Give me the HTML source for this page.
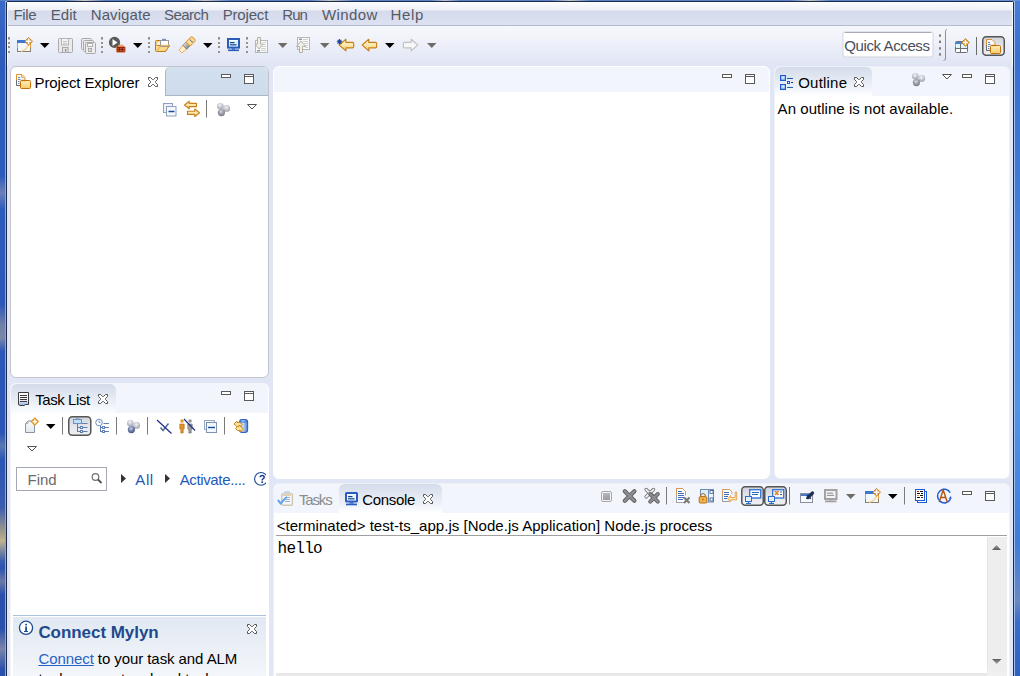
<!DOCTYPE html>
<html><head><meta charset="utf-8">
<style>
*{box-sizing:border-box;margin:0;padding:0}
html,body{width:1020px;height:676px;overflow:hidden;background:#e1e6f6}
body{position:relative;font-family:"Liberation Sans",sans-serif;color:#000}
.a{position:absolute}
.t{position:absolute;white-space:pre;line-height:1;font-size:15px}
</style></head><body>
<div class="a" style="left:0;top:0;width:5px;height:676px;background:linear-gradient(#3a68c6,#2d5bbd 10%,#2d5bbd 26%,#6a80b8 28.5%,#2d5bbd 31%,#2b57b8 45%,#7080a8 48%,#7a88a8 50%,#2b57b8 52%,#2a55b5 64%,#5a78b0 66%,#2a55b5 68%,#3a5db0 75%,#a8a088 79%,#c0b490 80%,#3a5db0 83%,#2a52b0 84%,#6a7aa8 86%,#2a50ad 88%,#2a50ad 93%,#7a86a8 96%,#2a50ad 99%)"></div>
<div class="a" style="left:5px;top:0;width:1px;height:676px;background:#8aa8de"></div>
<div class="a" style="left:1014px;top:0;width:1px;height:676px;background:#9cc0f0"></div>
<div class="a" style="left:1015px;top:0;width:5px;height:676px;background:linear-gradient(#4a7ed6,#3a6fd0 8%,#3f78d8 25%,#4d8ce6 45%,#5294ea 60%,#3f7cdc 80%,#6a88c0 89%,#3a6ccc 92%,#2f60c4)"></div>
<div class="a" style="left:0;top:0;width:1020px;height:1px;background:linear-gradient(90deg,#5a80c8 0,#5a80c8 65px,#d0ccb8 85px,#5a80c8 105px,#5a80c8 185px,#c8c8c0 205px,#5a80c8 230px,#5a80c8 310px,#c8c8c0 330px,#5a80c8 355px,#5a80c8 430px,#c0c4c8 445px,#5a80c8 460px,#5a80c8 550px,#c8c8c0 570px,#5a80c8 590px,#5a80c8 790px,#c8c8c0 810px,#5a80c8 830px,#6a90d8 1020px)"></div>
<div class="a" style="left:6px;top:1px;width:1008px;height:675px;border:1px solid #1c2a4c;border-bottom:none;border-radius:2px 2px 0 0"></div>
<div class="a" style="left:7px;top:2px;width:1006px;height:23px;background:linear-gradient(#fcfdfe 0,#eef0f7 8px,#d6dbeb 9px,#dde2f1 23px)"></div>
<div class="a" style="left:7px;top:25px;width:1006px;height:1px;background:#b6bbcb"></div>
<div class="a" style="left:7px;top:26px;width:1006px;height:40px;background:linear-gradient(#f7f8fc,#eef1f9 40%,#dfe5f5)"></div>
<div class="a" style="left:7px;top:2px;width:1px;height:64px;background:rgba(255,255,255,.8)"></div>
<div class="a" style="left:1012px;top:2px;width:1px;height:64px;background:rgba(255,255,255,.8)"></div>

<!-- Project Explorer stack (active) -->
<div class="a" style="left:10px;top:66px;width:259px;height:312px;border:1px solid #c3c5cb;border-radius:6px;background:#fff;overflow:hidden">
  <div class="a" style="left:154px;top:0;width:105px;height:29px;background:linear-gradient(#d3e0ee,#cfdded 70%,#cddbeb);border-bottom:1px solid #a9b5c9;border-left:1px solid #a9b5c9;border-top-left-radius:5px"></div>
</div>

<!-- Task List stack -->
<div class="a" style="left:10px;top:383px;width:259px;height:300px;border-radius:6px;background:#fff;overflow:hidden;border:1px solid #f4f6fa;border-right-color:#fff">
  <div class="a" style="left:0;top:0;width:259px;height:29px;background:#f2f5fb"></div>
  <div class="a" style="left:0;top:0;width:105px;height:30px;border-radius:6px 6px 0 0;background:linear-gradient(#d4dcea,#eef2f8 70%,#fff)"></div>
</div>

<!-- Editor area -->
<div class="a" style="left:273px;top:66px;width:497px;height:413px;border-radius:6px;background:#fff;overflow:hidden;border:1px solid #fff">
  <div class="a" style="left:0;top:0;width:495px;height:25px;background:#f2f5fb"></div>
</div>

<!-- Outline -->
<div class="a" style="left:774px;top:66px;width:236px;height:413px;border-radius:6px;background:#fff;overflow:hidden;border:1px solid #eef0f6">
  <div class="a" style="left:0;top:0;width:236px;height:29px;background:#f2f5fb"></div>
  <div class="a" style="left:0;top:0;width:97px;height:29px;border-radius:6px 6px 0 0;background:linear-gradient(#d4dcea,#eef2f8 70%,#fff)"></div>
</div>

<!-- Console -->
<div class="a" style="left:273px;top:483px;width:737px;height:200px;border-radius:6px;background:#fff;overflow:hidden;border:1px solid #eef0f6">
  <div class="a" style="left:0;top:0;width:737px;height:29px;background:#f2f5fb"></div>
  <div class="a" style="left:65px;top:0;width:103px;height:29px;border-radius:6px 6px 0 0;background:linear-gradient(#d4dcea,#eef2f8 70%,#fff)"></div>
</div>
<svg class="a" style="left:0;top:0" width="1020" height="676" viewBox="0 0 1020 676"><defs><linearGradient id="olg" x1="0" y1="0" x2="0" y2="1"><stop offset="0" stop-color="#ffffff"/><stop offset="1" stop-color="#8cc4f4"/></linearGradient><linearGradient id="ferg" x1="0" y1="0" x2="0" y2="1"><stop offset="0" stop-color="#d8d8d8"/><stop offset="1" stop-color="#888"/></linearGradient><linearGradient id="stopg" x1="0" y1="0" x2="0" y2="1"><stop offset="0" stop-color="#b8b6b8"/><stop offset="1" stop-color="#9c9a9c"/></linearGradient><clipPath id="qclip"><rect x="240" y="460" width="26" height="30"/></clipPath><linearGradient id="tlg" x1="0" y1="0" x2="0" y2="1"><stop offset="0" stop-color="#ffffff"/><stop offset=".6" stop-color="#e8eef8"/><stop offset="1" stop-color="#8fb0e6"/></linearGradient><radialGradient id="ballg" cx=".45" cy=".35" r=".6"><stop offset="0" stop-color="#f4f4f6"/><stop offset=".6" stop-color="#c6c8d0"/><stop offset="1" stop-color="#a4a8b4"/></radialGradient><radialGradient id="ballg2" cx=".45" cy=".35" r=".6"><stop offset="0" stop-color="#d8d8dc"/><stop offset=".6" stop-color="#9a9ca6"/><stop offset="1" stop-color="#7c7f8c"/></radialGradient><radialGradient id="ballb" cx=".45" cy=".35" r=".6"><stop offset="0" stop-color="#c8d0e0"/><stop offset=".6" stop-color="#6f80a8"/><stop offset="1" stop-color="#4a5a88"/></radialGradient><linearGradient id="cyl" x1="0" y1="0" x2="1" y2="0"><stop offset="0" stop-color="#5a8ee0"/><stop offset=".4" stop-color="#cfe0f8"/><stop offset="1" stop-color="#4a7ed6"/></linearGradient><linearGradient id="docg" x1="0" y1="0" x2="0" y2="1"><stop offset="0" stop-color="#f8f9fb"/><stop offset="1" stop-color="#e2e7f0"/></linearGradient><linearGradient id="arw" x1="0" y1="0" x2="0" y2="1"><stop offset="0" stop-color="#fff8dc"/><stop offset=".55" stop-color="#fbe6a6"/><stop offset="1" stop-color="#f2c055"/></linearGradient><linearGradient id="pressg" x1="0" y1="0" x2="0" y2="1"><stop offset="0" stop-color="#cfd2da"/><stop offset=".5" stop-color="#e4e6eb"/><stop offset="1" stop-color="#eef0f4"/></linearGradient><linearGradient id="fold" x1="0" y1="0" x2="0" y2="1"><stop offset="0" stop-color="#fff0c0"/><stop offset="1" stop-color="#f6cb6a"/></linearGradient><linearGradient id="myg" x1="0" y1="0" x2="0" y2="1"><stop offset="0" stop-color="#e1e8f2"/><stop offset="1" stop-color="#f6f8fb"/></linearGradient><linearGradient id="arg" x1="0" y1="0" x2="0" y2="1"><stop offset="0" stop-color="#9a9a9a"/><stop offset="1" stop-color="#5a5a5a"/></linearGradient><linearGradient id="arg2" x1="0" y1="0" x2="0" y2="1"><stop offset="0" stop-color="#5a5a5a"/><stop offset="1" stop-color="#aaaaaa"/></linearGradient></defs><rect x="8" y="37" width="2" height="2.6" fill="#989082"/><rect x="8" y="42" width="2" height="2" fill="#989082"/><rect x="8" y="46" width="2" height="2" fill="#989082"/><rect x="8" y="51" width="2" height="2" fill="#989082"/><rect x="17.5" y="40.5" width="13" height="11" fill="#f3f8fd" stroke="#8a7d6c"/><rect x="17" y="40" width="11" height="3" fill="#3a78d2"/><path d="M17.5 43v5M30.5 43v5" stroke="#e39a3a"/><path d="M21 51.2q5.5 -1 7.5 -6.5" stroke="#f3d591" fill="none" stroke-width="1.4"/><path d="M28.6 37.4l3.9 3.9-3.9 3.9-3.9-3.9z" fill="#d98e28" stroke="#c27818" stroke-width=".8"/><path d="M28.6 38.6v5.6M25.8 41.3h5.6" stroke="#fff" stroke-width="1.6"/><path d="M40 43h9.5l-4.75 5z" fill="#000"/><path d="M58.5 39.5q0-1 1-1h12q1 0 1 1v12q0 1-1 1h-12q-1 0-1-1z" fill="#ebebeb" stroke="#ababab"/><rect x="61.5" y="38.5" width="7" height="6.5" fill="#f4f4f4" stroke="#b4b4b8"/><rect x="63" y="41" width="4" height="1" fill="#c4c4c4"/><rect x="63" y="43" width="4" height="1" fill="#c4c4c4"/><rect x="62.5" y="47.5" width="5.5" height="5" fill="#e2e2e2" stroke="#a8a8a8"/><rect x="65" y="49" width="1.2" height="2.5" fill="#8a8a8a"/><path d="M81.5 39.5q0-1 1-1h8q1 0 1 1v9q0 1-1 1h-8q-1 0-1-1z" fill="#ececec" stroke="#a9a9a9"/><path d="M83.5 41.5q0-1 1-1h8q1 0 1 1v9q0 1-1 1h-8q-1 0-1-1z" fill="#ececec" stroke="#a9a9a9"/><path d="M85.5 43.5q0-1 1-1h8q1 0 1 1v9q0 1-1 1h-8q-1 0-1-1z" fill="#ececec" stroke="#a9a9a9"/><rect x="87.5" y="43.5" width="5" height="3" fill="#f7f7f7" stroke="#b1b1b1"/><rect x="88.5" y="48.5" width="3" height="3" fill="#dedede" stroke="#a9a9a9"/><rect x="101" y="37" width="2" height="2.6" fill="#989082"/><rect x="101" y="42" width="2" height="2" fill="#989082"/><rect x="101" y="46" width="2" height="2" fill="#989082"/><rect x="101" y="51" width="2" height="2" fill="#989082"/><circle cx="114.5" cy="42.4" r="5.6" fill="#5a5a5a"/><path d="M112.5 39v7l5-3.5z" fill="#fff"/><rect x="116.4" y="46.6" width="8.8" height="5.6" rx=".8" fill="#8c1a10" stroke="#e09040" stroke-width=".8"/><path d="M118.6 46.6v-1.4h4.4v1.4" fill="none" stroke="#e09040" stroke-width="1"/><path d="M117.5 48.6h1.2M120.2 48.6h1.4M123 48.6h1.2M117.5 50.6h1.2M120.2 50.6h1.4M123 50.6h1.2" stroke="#f0a860" stroke-width=".7"/><path d="M133 43h9.5l-4.75 5z" fill="#000"/><rect x="148" y="37" width="2" height="2.6" fill="#989082"/><rect x="148" y="42" width="2" height="2" fill="#989082"/><rect x="148" y="46" width="2" height="2" fill="#989082"/><rect x="148" y="51" width="2" height="2" fill="#989082"/><path d="M155.5 44.5v6q0 1 1 1h9l4-6h-12z" fill="#fbd98a" stroke="#c47a18"/><path d="M155.5 44.5v-3q0-1 1-1h4" fill="#f6cc74" stroke="#c47a18"/><rect x="160.5" y="40.5" width="8" height="6" fill="#fff" stroke="#9a9a9a"/><rect x="162" y="38.8" width="4" height="1.8" fill="#7d92b4"/><path d="M169.5 45.5l-4 6" stroke="#d8912e"/><path d="M157 50.8l4-5.5h8" fill="none" stroke="#e9a94a" stroke-width="1"/><g transform="translate(187 45) rotate(-45)"><path d="M-9.2 -1.8L-3.2 -2.8V2.8L-9.2 1.8Z" fill="#fff4d8" stroke="#f0a850" stroke-width=".9"/><rect x="-3.2" y="-2.8" width="4.6" height="5.6" fill="url(#ferg)" stroke="#707070" stroke-width=".6"/><rect x="1.4" y="-2.8" width="8" height="5.6" rx="1" fill="#fbe29c" stroke="#e8963a" stroke-width="1"/><circle cx="6" cy="-.9" r=".65" fill="#2a4a9a"/><circle cx="6" cy="1" r=".65" fill="#2a4a9a"/></g><path d="M203 43h9.5l-4.75 5z" fill="#000"/><rect x="218" y="37" width="2" height="2.6" fill="#989082"/><rect x="218" y="42" width="2" height="2" fill="#989082"/><rect x="218" y="46" width="2" height="2" fill="#989082"/><rect x="218" y="51" width="2" height="2" fill="#989082"/><rect x="228" y="39" width="11" height="8.6" fill="#d4f6fc" stroke="#2a5cb8" stroke-width="2"/><rect x="229" y="40" width="9" height="1" fill="#fff"/><rect x="230" y="42" width="4.5" height="1.2" fill="#1d3f8a"/><rect x="230" y="44.2" width="6.5" height="1.2" fill="#1d3f8a"/><rect x="232" y="48.4" width="3" height="1.2" fill="#2a5cb8"/><rect x="228" y="49.5" width="11" height="1.6" fill="#2a5cb8"/><rect x="246" y="37" width="2" height="2.6" fill="#989082"/><rect x="246" y="42" width="2" height="2" fill="#989082"/><rect x="246" y="46" width="2" height="2" fill="#989082"/><rect x="246" y="51" width="2" height="2" fill="#989082"/><rect x="255.5" y="40.5" width="12" height="12" fill="#fafafa" stroke="#b8b8b8"/><rect x="263" y="42" width="3" height="1" fill="#d0d0d0"/><rect x="263" y="44" width="3" height="1" fill="#d0d0d0"/><rect x="262" y="46" width="4" height="1" fill="#d0d0d0"/><rect x="261" y="48" width="5" height="1" fill="#d0d0d0"/><rect x="261" y="50" width="5" height="1" fill="#d0d0d0"/><rect x="257" y="50" width="3" height="1.5" fill="#8a96b0"/><path d="M257.5 37.5h3v6.5h2.5l-4 5-4-5h2.5z" fill="#f2efe8" stroke="#b4b0a8"/><path d="M278 43h9.5l-4.75 5z" fill="#6f6b66"/><rect x="297.5" y="37.5" width="12" height="12" fill="#fafafa" stroke="#b8b8b8"/><rect x="299" y="38.6" width="3" height="1.4" fill="#8a96b0"/><rect x="303" y="39" width="5" height="1" fill="#d0d0d0"/><rect x="303" y="41" width="5" height="1" fill="#d0d0d0"/><rect x="304" y="43" width="4" height="1" fill="#d0d0d0"/><rect x="305" y="45" width="3" height="1" fill="#d0d0d0"/><rect x="305" y="47" width="3" height="1" fill="#d0d0d0"/><path d="M299.5 52.5v-6h-3l4.5-5.5 4.5 5.5h-3v6z" fill="#f2efe8" stroke="#b4b0a8"/><path d="M320 43h9.5l-4.75 5z" fill="#6f6b66"/><path d="M339.3 45L345.90000000000003 39.3V42.4H352.7Q353.7 42.4 353.7 43.4V46.8Q353.7 47.8 352.7 47.8H345.90000000000003V50.9Z" fill="url(#arw)" stroke="#c8801a" stroke-width="1.15" stroke-linejoin="round"/><path d="M339.5 39v5.6M336.8 41.8h5.4M337.6 39.9l3.8 3.8M341.4 39.9l-3.8 3.8" stroke="#1d4a9a" stroke-width="1.1"/><path d="M362.2 45L368.8 39.3V42.4H375.59999999999997Q376.59999999999997 42.4 376.59999999999997 43.4V46.8Q376.59999999999997 47.8 375.59999999999997 47.8H368.8V50.9Z" fill="url(#arw)" stroke="#c8801a" stroke-width="1.15" stroke-linejoin="round"/><path d="M385 43h9.5l-4.75 5z" fill="#000"/><path d="M417.8 45L411.2 39.3V42.4H404.40000000000003Q403.40000000000003 42.4 403.40000000000003 43.4V46.8Q403.40000000000003 47.8 404.40000000000003 47.8H411.2V50.9Z" fill="#f7f7f7" stroke="#c2c2c2" stroke-width="1.15" stroke-linejoin="round"/><path d="M427 43h9.5l-4.75 5z" fill="#6f6b66"/><rect x="843" y="32" width="90" height="25" rx="2" fill="#fff" stroke="#cfd3dc"/><path d="M845 32.5h86" stroke="#a7abb4"/><rect x="939" y="34.4" width="2" height="2.4" fill="#857e72"/><rect x="939" y="40.6" width="2" height="2.4" fill="#857e72"/><rect x="939" y="47.2" width="2" height="2.4" fill="#857e72"/><rect x="939" y="53.2" width="2" height="2.4" fill="#857e72"/><path d="M947 29.3l-1.5 1.2v29l-2 1" fill="none" stroke="#8a909c"/><rect x="955.5" y="41.5" width="12" height="11" rx="1" fill="#dff4fb" stroke="#6e6e6e"/><rect x="956" y="42" width="11" height="2" fill="#4a86d0"/><path d="M960.5 44v8.5M956 48.5h11" stroke="#6e6e6e"/><rect x="961" y="49" width="6" height="3" fill="#f8fbff"/><rect x="956" y="49" width="4" height="3" fill="#fff"/><path d="M955.5 44v3" stroke="#e39a3a"/><path d="M965.5 38.6l3.9 3.9-3.9 3.9-3.9-3.9z" fill="#d98e28" stroke="#c27818" stroke-width=".8"/><path d="M965.5 39.8v5.4M962.8 42.5h5.4" stroke="#fff" stroke-width="1.5"/><rect x="976" y="37" width="1" height="18" fill="#6a6a6a"/><rect x="982.75" y="36.75" width="21.5" height="18.5" rx="3.5" fill="url(#pressg)" stroke="#555" stroke-width="1.5"/><path d="M986.5 50.5v-11h5.5l3 3v3" fill="#f6f9fd" stroke="#e0922e"/><path d="M986.5 45v5.5h4" fill="none" stroke="#6a6a6a"/><path d="M988 42.5h2M988 44.5h2.5M988 46.5h1.5M988 48.5h1.5" stroke="#5f86c6" stroke-width="1"/><rect x="990.5" y="45.5" width="10" height="8" rx="1" fill="url(#fold)" stroke="#c4700e"/><path d="M991.5 45.5h4" stroke="#c4700e" stroke-width="1.4"/><path d="M16.5 85.5v-11h5.5l3 3v3" fill="#f6f9fd" stroke="#e0922e"/><path d="M16.5 80v5.5h4" fill="none" stroke="#6a6a6a"/><path d="M21.5 74.5v3h3" fill="#f8d9a0" stroke="#e0a050" stroke-width=".8"/><path d="M18 77.5h2M18 79.5h2.5M18 81.5h1.5M18 83.5h1.5" stroke="#5f86c6" stroke-width="1"/><rect x="20.5" y="80.5" width="10" height="8" rx="1" fill="url(#fold)" stroke="#c4700e"/><path d="M21.5 80.5h4" stroke="#c4700e" stroke-width="1.4"/><polygon points="148.5,77.5 150.5,77.5 152.5,79.5 153.5,79.5 155.5,77.5 157.5,77.5 157.5,79.5 155.5,81.5 155.5,82.5 157.5,84.5 157.5,86.5 155.5,86.5 153.5,84.5 152.5,84.5 150.5,86.5 148.5,86.5 148.5,84.5 150.5,82.5 150.5,81.5 148.5,79.5" fill="#fff" stroke="#555"/><rect x="221.5" y="74.5" width="9" height="3" fill="#fff" stroke="#5a5a5a"/><rect x="244.5" y="74.5" width="9" height="9" fill="#fff" stroke="#5a5a5a"/><path d="M244 76.5h10" stroke="#5a5a5a"/><rect x="163.5" y="103.5" width="9" height="9" fill="#eef2f8" stroke="#8ea0bc"/><rect x="166.5" y="106.5" width="9.5" height="9.5" fill="#f4f7fb" stroke="#8ea0bc"/><path d="M168.5 111.5h6" stroke="#1c4c9c" stroke-width="1.5"/><path d="M184.5 105L189.2 101.2V103.4H196.5V106.6H189.2V108.8Z" fill="url(#arw)" stroke="#c8801a" stroke-width="1.1" stroke-linejoin="round"/><path d="M199.5 112.8L194.8 109V111.2H187.5V114.4H194.8V116.6Z" fill="url(#arw)" stroke="#c8801a" stroke-width="1.1" stroke-linejoin="round"/><rect x="206" y="100" width="1" height="17.5" fill="#7a7a7a"/><circle cx="220.3" cy="106.2" r="3.3" fill="url(#ballg)"/><circle cx="226.7" cy="108.4" r="3.4" fill="url(#ballg)"/><circle cx="221.4" cy="112.6" r="3.6" fill="url(#ballg2)"/><path d="M247.5 104.5h9l-4.5 4.5z" fill="#fff" stroke="#555"/><rect x="722.5" y="74.5" width="9" height="3" fill="#fff" stroke="#5a5a5a"/><rect x="745.5" y="74.5" width="9" height="9" fill="#fff" stroke="#5a5a5a"/><path d="M745 76.5h10" stroke="#5a5a5a"/><rect x="780.6" y="75.6" width="4.8" height="4.8" fill="url(#olg)" stroke="#1a5ad0" stroke-width="1.2"/><rect x="780.6" y="84.6" width="4.8" height="4.8" fill="url(#olg)" stroke="#1a5ad0" stroke-width="1.2"/><rect x="787" y="77" width="6" height="1" fill="#c4f0fa"/><rect x="787" y="78" width="6" height="1" fill="#2a50a8"/><rect x="787.5" y="81.5" width="2" height="2" fill="#fff" stroke="#1a5ad0"/><rect x="791" y="82" width="2" height="1" fill="#1a3a80"/><rect x="787" y="86" width="6" height="1" fill="#c4f0fa"/><rect x="787" y="87" width="6" height="1" fill="#3a5aa8"/><polygon points="854.5,77.5 856.5,77.5 858.5,79.5 859.5,79.5 861.5,77.5 863.5,77.5 863.5,79.5 861.5,81.5 861.5,82.5 863.5,84.5 863.5,86.5 861.5,86.5 859.5,84.5 858.5,84.5 856.5,86.5 854.5,86.5 854.5,84.5 856.5,82.5 856.5,81.5 854.5,79.5" fill="#fff" stroke="#555"/><circle cx="915.3" cy="76.2" r="3.3" fill="url(#ballg)"/><circle cx="921.7" cy="78.4" r="3.4" fill="url(#ballg)"/><circle cx="916.4" cy="82.6" r="3.6" fill="url(#ballg2)"/><path d="M942.5 74.5h9l-4.5 4.5z" fill="#fff" stroke="#555"/><rect x="962.5" y="74.5" width="9" height="3" fill="#fff" stroke="#5a5a5a"/><rect x="985.5" y="74.5" width="9" height="9" fill="#fff" stroke="#5a5a5a"/><path d="M985 76.5h10" stroke="#5a5a5a"/><path d="M18.5 392.5H28.5V404.5H25.5L24 405.5H20L18.5 404.5Z" fill="url(#tlg)" stroke="#3c3c3c"/><rect x="20" y="395" width="7" height="1" fill="#3a3a3a"/><rect x="20" y="397" width="7" height="1" fill="#3a3a3a"/><rect x="20" y="399" width="7" height="1" fill="#3a3a3a"/><rect x="20" y="401" width="7" height="1" fill="#3a3a3a"/><polygon points="98.5,394.5 100.5,394.5 102.5,396.5 103.5,396.5 105.5,394.5 107.5,394.5 107.5,396.5 105.5,398.5 105.5,399.5 107.5,401.5 107.5,403.5 105.5,403.5 103.5,401.5 102.5,401.5 100.5,403.5 98.5,403.5 98.5,401.5 100.5,399.5 100.5,398.5 98.5,396.5" fill="#fff" stroke="#555"/><rect x="221.5" y="391.5" width="9" height="3" fill="#fff" stroke="#5a5a5a"/><rect x="244.5" y="391.5" width="9" height="9" fill="#fff" stroke="#5a5a5a"/><path d="M244 393.5h10" stroke="#5a5a5a"/><path d="M25.5 423.5l2.5-2.5h6.5v11.5h-9z" fill="url(#docg)" stroke="#8a93a3"/><path d="M25.5 423.5h2.5v-2.5" fill="none" stroke="#a8b0bc"/><path d="M34.8 418l3.6 3.6-3.6 3.6-3.6-3.6z" fill="#f2b445" stroke="#e0962a" stroke-width="1.1"/><path d="M34.8 419.4v4.4M32.6 421.6h4.4" stroke="#fff" stroke-width="1.2"/><path d="M46 424h9.5l-4.75 5z" fill="#000"/><rect x="62" y="417" width="1" height="17.5" fill="#7a7a7a"/><rect x="68.75" y="416.75" width="22" height="18.5" rx="3.5" fill="url(#pressg)" stroke="#555" stroke-width="1.5"/><rect x="73.5" y="419.5" width="8" height="4" fill="#bfe0f6" stroke="#7090c0"/><path d="M75.5 418.5h4" stroke="#9ab0d0"/><path d="M77.5 423.5v8.5M77.5 427.5h3M77.5 431.5h3M82 423.5h5.5M83 427.5h4.5M83 431.5h4.5" stroke="#5f7fb0"/><rect x="80.5" y="426.5" width="2" height="2" fill="#fff" stroke="#5f7fb0"/><rect x="80.5" y="430.5" width="2" height="2" fill="#fff" stroke="#5f7fb0"/><circle cx="99" cy="422.5" r="3.3" fill="#fff" stroke="#6d8fbf"/><path d="M99 420.5v2h1.5" stroke="#5f7fb0" stroke-width=".8" fill="none"/><path d="M100.5 426v6M100.5 427.5h2M100.5 431.5h2M103.5 423.5h5.5M105 427.5h4M105 431.5h4" stroke="#5f7fb0"/><rect x="102.5" y="426.5" width="2" height="2" fill="#fff" stroke="#5f7fb0"/><rect x="102.5" y="430.5" width="2" height="2" fill="#fff" stroke="#5f7fb0"/><rect x="116" y="417" width="1" height="17.5" fill="#7a7a7a"/><circle cx="130.3" cy="423.2" r="3.3" fill="url(#ballg)"/><circle cx="136.7" cy="425.4" r="3.4" fill="url(#ballg)"/><circle cx="131.4" cy="429.6" r="3.6" fill="url(#ballb)"/><rect x="147" y="417" width="1" height="17.5" fill="#7a7a7a"/><path d="M160.5 427.5l2.5 3 5.5-7" stroke="#56708f" stroke-width="1.5" fill="none"/><path d="M157 420l14.5 13.5" stroke="#1a2c88" stroke-width="1.2"/><circle cx="182" cy="421" r="1.8" fill="#e49a2c"/><path d="M179.8 424h4.4v5h-1v4h-2.4v-4h-1z" fill="#e0922a" stroke="#b86c14" stroke-width=".6"/><circle cx="190" cy="421" r="1.8" fill="#9a9a9a"/><path d="M187.8 424h4.4v5h-1v4h-2.4v-4h-1z" fill="#a0a0a0" stroke="#6a6a6a" stroke-width=".6"/><path d="M184 419l11 11.5" stroke="#1a2c88" stroke-width="1.1"/><rect x="204.5" y="420.5" width="10" height="9" fill="#eef4fb" stroke="#9aaac4"/><rect x="206.5" y="422.5" width="10" height="10" fill="#f2f7fc" stroke="#8090b0"/><path d="M208 427.5h7" stroke="#1c4c9c" stroke-width="1.4"/><rect x="224" y="417" width="1" height="17.5" fill="#7a7a7a"/><rect x="239.6" y="419.6" width="8" height="12.8" rx="2.5" fill="url(#cyl)" stroke="#2a62c6" stroke-width="1.1"/><path d="M240 422h7.2" stroke="#2a62c6" stroke-width=".8"/><path d="M234 424l3-3v1.5h3l2 2-2 2h-1.5v1.5z" fill="#fbe29a" stroke="#d08a1a" stroke-width="1"/><path d="M243.5 429l-3 3v-1.5h-3l-2-2 2-2h1.5v-1.5z" fill="#fbe29a" stroke="#d08a1a" stroke-width="1"/><path d="M27.5 446.5h9l-4.5 4.5z" fill="#fff" stroke="#555"/><rect x="16.5" y="467.5" width="90" height="23" fill="#fff" stroke="#a3a8b3"/><circle cx="95.5" cy="477" r="3.3" fill="#fff" stroke="#707070" stroke-width="1.2"/><path d="M98 479.5l3.5 3.5" stroke="#505050" stroke-width="1.8"/><path d="M121 474v9l5-4.5z" fill="#3a3036"/><path d="M165 474v9l5-4.5z" fill="#3a3036"/><g clip-path="url(#qclip)"><circle cx="261" cy="478.9" r="6.4" fill="#fff" stroke="#1d4a9a" stroke-width="1.1"/></g><path d="M260.2 477.3q0-1.9 2-1.9q2 0 2 1.8q0 1.1-1.2 1.7q-.8 .4-.8 1.3v.3" fill="none" stroke="#1a3f90" stroke-width="1.5"/><rect x="261.4" y="481.4" width="1.7" height="1.6" fill="#1a3f90"/><rect x="13" y="615" width="253" height="70" fill="url(#myg)"/><rect x="13" y="615" width="253" height="1" fill="#a9c0de"/><rect x="13" y="616" width="253" height="1" fill="#fff"/><circle cx="26" cy="627.8" r="6.6" fill="#fff" stroke="#1e4b96" stroke-width="1.3"/><rect x="25.2" y="626.5" width="1.8" height="5" fill="#1e4b96"/><rect x="25.2" y="623.8" width="1.8" height="1.6" fill="#1e4b96"/><path d="M24 631.5h4" stroke="#1e4b96"/><polygon points="247.5,624.5 249.5,624.5 251.5,626.5 252.5,626.5 254.5,624.5 256.5,624.5 256.5,626.5 254.5,628.5 254.5,629.5 256.5,631.5 256.5,633.5 254.5,633.5 252.5,631.5 251.5,631.5 249.5,633.5 247.5,633.5 247.5,631.5 249.5,629.5 249.5,628.5 247.5,626.5" fill="#fff" stroke="#555"/><rect x="281.8" y="493.8" width="10.6" height="11.4" rx="1" fill="#f5f7fb" stroke="#d2c6b4" stroke-width="1.5"/><rect x="284" y="491.2" width="6" height="3.4" rx="1" fill="#c8d0dc"/><rect x="283" y="495" width="8" height="1" fill="#f0c890"/><rect x="286" y="497" width="4" height="1" fill="#9fb0cc"/><rect x="286" y="499" width="4" height="1" fill="#9fb0cc"/><rect x="285" y="501" width="5" height="1" fill="#9fb0cc"/><path d="M278.4 500.6l2.2 2.8 5.6-6" stroke="#5ea4ec" stroke-width="2" fill="none" stroke-linecap="round"/><rect x="346" y="493" width="11" height="8.6" rx=".6" fill="#e6f8fc" stroke="#2a5cc0" stroke-width="2"/><rect x="347" y="494" width="9" height="1" fill="#fff"/><rect x="348" y="496" width="4.5" height="1.2" fill="#1d3f8a"/><rect x="348" y="498.2" width="6.5" height="1.2" fill="#1d3f8a"/><rect x="349.5" y="502.4" width="4" height="1.2" fill="#2a5cc0"/><rect x="346" y="503.6" width="11" height="1.7" fill="#2a5cc0"/><polygon points="423.5,494.5 425.5,494.5 427.5,496.5 428.5,496.5 430.5,494.5 432.5,494.5 432.5,496.5 430.5,498.5 430.5,499.5 432.5,501.5 432.5,503.5 430.5,503.5 428.5,501.5 427.5,501.5 425.5,503.5 423.5,503.5 423.5,501.5 425.5,499.5 425.5,498.5 423.5,496.5" fill="#fff" stroke="#555"/><rect x="601.5" y="491.5" width="10" height="10" rx="1.5" fill="#f4f4f8" stroke="#a4a6b0"/><rect x="603" y="493" width="7" height="7" fill="url(#stopg)"/><path d="M624.8 491.2l9.6 9.6M634.4 491.2l-9.6 9.6" stroke="#5e5e5e" stroke-width="4.2" stroke-linecap="round"/><path d="M624.8 491.2l9.6 9.6M634.4 491.2l-9.6 9.6" stroke="#8e8e92" stroke-width="2.4" stroke-linecap="round"/><path d="M646.2 489.6l7.2 7.2M653.4 489.6l-7.2 7.2" stroke="#707070" stroke-width="3.6" stroke-linecap="round"/><path d="M646.2 489.6l7.2 7.2M653.4 489.6l-7.2 7.2" stroke="#eef0f4" stroke-width="2" stroke-linecap="round"/><path d="M650.2 494l7.6 7.6M657.8 494l-7.6 7.6" stroke="#5e5e5e" stroke-width="4" stroke-linecap="round"/><path d="M650.2 494l7.6 7.6M657.8 494l-7.6 7.6" stroke="#8e8e92" stroke-width="2.2" stroke-linecap="round"/><rect x="666" y="487" width="1" height="17.5" fill="#7a7a7a"/><path d="M676.5 496v-7.5h6l3 3v4" fill="#fff" stroke="#d49a5a"/><path d="M676.5 495v7.5h7" fill="none" stroke="#9a9a9a"/><path d="M676.5 496v6.5h8v-11l-2-3" fill="#fff" stroke="none"/><path d="M676.5 489v13.5M676.5 502.5h7" stroke="#a0a0a0"/><path d="M676.5 488.5h6l3 3" fill="none" stroke="#d49a5a"/><path d="M676.5 488.5v7" stroke="#d49a5a"/><rect x="678" y="491" width="4" height="1" fill="#3d6cc0"/><rect x="678" y="493" width="6" height="1" fill="#3d6cc0"/><rect x="678" y="495" width="6" height="1" fill="#3d6cc0"/><rect x="678" y="497" width="6" height="1" fill="#3d6cc0"/><rect x="678" y="499" width="5" height="1" fill="#3d6cc0"/><path d="M684 497.5l5.5 5.5M689.5 497.5l-5.5 5.5" stroke="#7a7a7a" stroke-width="2.2"/><rect x="700.5" y="489.5" width="13" height="12.5" fill="#eaf8fd" stroke="#6f8cb8"/><rect x="701" y="490" width="7" height="12" fill="#d8f0fb"/><path d="M708.5 489.5v12.5" stroke="#6f8cb8"/><rect x="710" y="490.5" width="3" height="3" fill="#fff" stroke="#3d5c8e" stroke-width=".8"/><rect x="710" y="498" width="3" height="3" fill="#fff" stroke="#3d5c8e" stroke-width=".8"/><rect x="699.2" y="496.6" width="7.6" height="6.4" rx="1.2" fill="#f2b54e" stroke="#b86a10" stroke-width="1"/><path d="M700.8 496.5v-1.5q2.2-3 4.4 0v1.5" fill="none" stroke="#b86a10" stroke-width="1.1"/><rect x="702.5" y="498.5" width="1" height="2" fill="#a05a10"/><path d="M722.5 501.5v-12h7l2.5 2.5v2" fill="#fff" stroke="#d49a5a"/><path d="M722.5 496v5.5h7" fill="none" stroke="#9a9a9a"/><rect x="724" y="492" width="5" height="1" fill="#3d6cc0"/><rect x="724" y="494" width="5" height="1" fill="#3d6cc0"/><rect x="724" y="496" width="4" height="1" fill="#3d6cc0"/><rect x="724" y="498" width="3" height="1" fill="#3d6cc0"/><path d="M735.2 492v5.5h-4.5v-2l-3.3 3.2 3.3 3.2v-2h6v-7.9z" fill="#fde6a8" stroke="#e0a050" stroke-width=".9"/><rect x="741.75" y="486.75" width="21.5" height="18.5" rx="3.5" fill="url(#pressg)" stroke="#555" stroke-width="1.5"/><rect x="764.75" y="486.75" width="21.5" height="18.5" rx="3.5" fill="url(#pressg)" stroke="#555" stroke-width="1.5"/><rect x="749.7" y="489.7" width="11" height="8.3" fill="#fff" stroke="#3a78d8" stroke-width="1.4"/><path d="M752 492.5h7M752 494.5h6" stroke="#2f6cc6"/><rect x="745.5" y="496.5" width="6" height="5" fill="#e2f1fb" stroke="#2f6cc6"/><path d="M746 503.5h5M748.5 501.5v2" stroke="#2f6cc6" stroke-width="1.2"/><rect x="772.7" y="489.7" width="11" height="8.3" fill="#fff" stroke="#3a78d8" stroke-width="1.4"/><path d="M775 491l3.5 4M778.5 491l-3.5 4" stroke="#e08a30" stroke-width="1.8"/><path d="M780 492h2M780 494.5h2" stroke="#2f6cc6"/><rect x="768.5" y="496.5" width="6" height="5" fill="#e2f1fb" stroke="#2f6cc6"/><path d="M769 503.5h5M771.5 501.5v2" stroke="#2f6cc6" stroke-width="1.2"/><rect x="789" y="487" width="1" height="17.5" fill="#7a7a7a"/><rect x="800.5" y="493.5" width="12" height="9" fill="#f6f9fd" stroke="#8a8f9a"/><rect x="801" y="494" width="11" height="2" fill="#3d7ad0"/><path d="M806 499l3.5-3.5" stroke="#3a3a4a" stroke-width="1"/><path d="M808 497.5l4.5-4.5" stroke="#1e2e58" stroke-width="3.2" stroke-linecap="round"/><path d="M807.2 495.2l3.6 3.6" stroke="#1e2e58" stroke-width="1.6"/><rect x="825" y="490" width="11.5" height="9" fill="#f4f4f4" stroke="#a2a2a2" stroke-width="2"/><rect x="827" y="492.5" width="6" height="1.2" fill="#9a9a9a"/><rect x="827" y="494.8" width="7" height="1.2" fill="#9a9a9a"/><rect x="829" y="499.5" width="4" height="1" fill="#a2a2a2"/><rect x="825" y="500.5" width="11.5" height="1.8" fill="#a2a2a2"/><path d="M846 494h9.5l-4.75 5z" fill="#6f6b66"/><rect x="865.5" y="491.5" width="13" height="11" fill="#f3f8fd" stroke="#8a7d6c"/><rect x="865" y="491" width="11" height="3" fill="#3a78d2"/><path d="M865.5 494v5M878.5 494v5" stroke="#e39a3a"/><path d="M869 502.2q5.5 -1 7.5 -6.5" stroke="#f3d591" fill="none" stroke-width="1.4"/><path d="M876.6 488.4l3.9 3.9-3.9 3.9-3.9-3.9z" fill="#d98e28" stroke="#c27818" stroke-width=".8"/><path d="M876.6 489.6v5.6M873.8 492.3h5.6" stroke="#fff" stroke-width="1.6"/><path d="M888 494h9.5l-4.75 5z" fill="#000"/><rect x="904" y="487" width="1" height="17.5" fill="#7a7a7a"/><rect x="917.5" y="491.5" width="9" height="11" fill="#fff" stroke="#1f5ad6"/><rect x="915.5" y="489.5" width="9" height="11" fill="#fff" stroke="#1f5ad6"/><rect x="917" y="491" width="2" height="1" fill="#7a1a20"/><rect x="920" y="491" width="3" height="1" fill="#111"/><rect x="917" y="493" width="3" height="1" fill="#111"/><rect x="921" y="493" width="2" height="1" fill="#111"/><rect x="917" y="495" width="2" height="1" fill="#f0902a"/><rect x="920" y="495" width="3" height="1" fill="#111"/><rect x="917" y="497" width="3" height="1" fill="#111"/><rect x="921" y="497" width="2" height="1" fill="#7a1a20"/><path d="M950.2 492.6A6.8 6.8 0 1 0 950.4 499.2" fill="none" stroke="#1f5ad6" stroke-width="1.5"/><path d="M948.5 498.5l3 .5-.5-3z" fill="#1f5ad6"/><path d="M939.2 502l4-12 4 12M940.8 497.5h5" stroke="#b4520e" stroke-width="1.4" fill="none"/><rect x="962.5" y="491.5" width="9" height="3" fill="#fff" stroke="#5a5a5a"/><rect x="985.5" y="491.5" width="9" height="9" fill="#fff" stroke="#5a5a5a"/><path d="M985 493.5h10" stroke="#5a5a5a"/><rect x="276" y="535" width="731" height="1" fill="#a0a0a0"/><rect x="987" y="537" width="20" height="134" fill="#eeeeee"/><rect x="987" y="537" width="1" height="134" fill="#e6e6e6"/><path d="M992 550l4.5-5 4.5 5z" fill="url(#arg)"/><path d="M992 659h9.5l-4.75 5z" fill="url(#arg2)"/><rect x="276" y="673" width="711" height="3" fill="#e8e8e8"/><rect x="987" y="671" width="20" height="5" fill="#f0f0f0"/></svg>
<div class="t" id="TFile" style="left:13.5px;top:6px;font:normal 15px 'Liberation Sans';letter-spacing:-0.333px;color:#555a68">File</div>
<div class="t" id="TEdit" style="left:50.8px;top:6px;font:normal 15px 'Liberation Sans';letter-spacing:0.033px;color:#555a68">Edit</div>
<div class="t" id="TNavigate" style="left:90.8px;top:6px;font:normal 15px 'Liberation Sans';letter-spacing:0.071px;color:#555a68">Navigate</div>
<div class="t" id="TSearch" style="left:163.9px;top:6px;font:normal 15px 'Liberation Sans';letter-spacing:-0.5px;color:#555a68">Search</div>
<div class="t" id="TProject" style="left:222.7px;top:6px;font:normal 15px 'Liberation Sans';letter-spacing:-0.167px;color:#555a68">Project</div>
<div class="t" id="TRun" style="left:282.3px;top:6px;font:normal 15px 'Liberation Sans';letter-spacing:-1.0px;color:#555a68">Run</div>
<div class="t" id="TWindow" style="left:322.0px;top:6px;font:normal 15px 'Liberation Sans';letter-spacing:0.4px;color:#555a68">Window</div>
<div class="t" id="THelp" style="left:390.5px;top:6px;font:normal 15px 'Liberation Sans';letter-spacing:0.633px;color:#555a68">Help</div>
<div class="t" id="TQA" style="left:844.3px;top:37px;font:normal 15px 'Liberation Sans';letter-spacing:-0.4px;color:#4a4e5a">Quick Access</div>
<div class="t" id="TPE" style="left:34.5px;top:74px;font:normal 15px 'Liberation Sans';letter-spacing:-0.113px;color:#000">Project Explorer</div>
<div class="t" id="TOL" style="left:798.2px;top:74px;font:normal 15px 'Liberation Sans';letter-spacing:0.217px;color:#000">Outline</div>
<div class="t" id="TOLtxt" style="left:777.6px;top:100px;font:normal 15px 'Liberation Sans';letter-spacing:0.044px;color:#000">An outline is not available.</div>
<div class="t" id="TTL" style="left:35.3px;top:391px;font:normal 15px 'Liberation Sans';letter-spacing:-0.438px;color:#000">Task List</div>
<div class="t" id="TFind" style="left:27.6px;top:471px;font:normal 15px 'Liberation Sans';letter-spacing:-0.067px;color:#6b6b6b">Find</div>
<div class="t" id="TAll" style="left:135.3px;top:471px;font:normal 15px 'Liberation Sans';letter-spacing:0.6px;color:#2358bc">All</div>
<div class="t" id="TAct" style="left:179.7px;top:471px;font:normal 15px 'Liberation Sans';letter-spacing:-0.364px;color:#2358bc">Activate....</div>
<div class="t" id="TCM" style="left:38.4px;top:623px;font:bold 17px 'Liberation Sans';letter-spacing:-0.05px;color:#1c4a8c">Connect Mylyn</div>
<div class="t" id="TCL" style="left:38.4px;top:650px;font:normal 15px 'Liberation Sans';letter-spacing:-0.074px;color:#000"><span style="color:#2862c4;text-decoration:underline;text-underline-offset:1px">Connect</span> to your task and ALM</div>
<div class="t" id="TTasks" style="left:298.9px;top:491px;font:normal 15px 'Liberation Sans';letter-spacing:-1.125px;color:#8c8c8c">Tasks</div>
<div class="t" id="TConsole" style="left:362.3px;top:491px;font:normal 15px 'Liberation Sans';letter-spacing:-0.333px;color:#000">Console</div>
<div class="t" id="TTerm" style="left:276.7px;top:517px;font:normal 15px 'Liberation Sans';letter-spacing:0.033px;color:#000">&lt;terminated&gt; test-ts_app.js [Node.js Application] Node.js process</div>
<div class="t" id="Thello" style="left:277.6px;top:540px;font:normal 16px 'Liberation Mono';letter-spacing:-0.75px;color:#000">hello</div>
<div class="t" id="Thello" style="left:38.4px;top:670px;font:15px 'Liberation Sans';color:#000">tools or create a local task.</div>
</body></html>
